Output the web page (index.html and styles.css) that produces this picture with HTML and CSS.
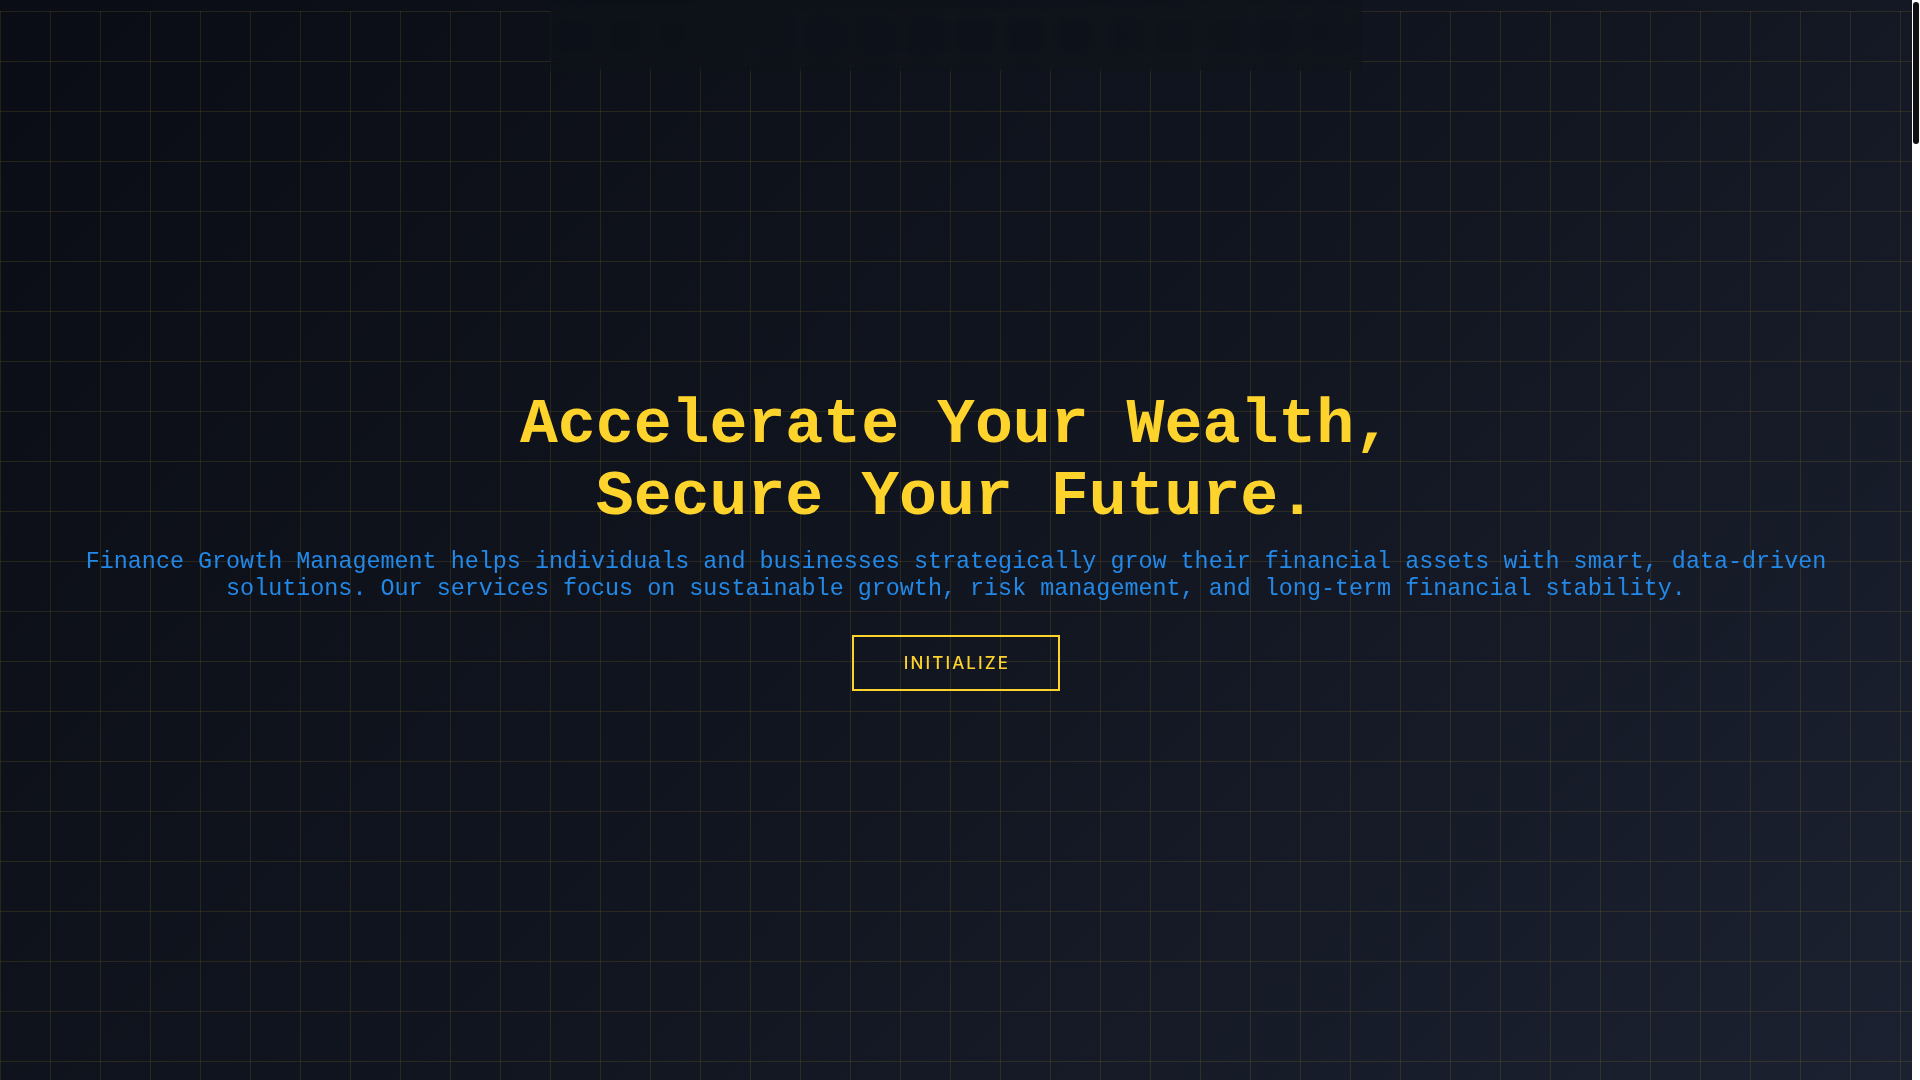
FILE: index.html
```html
<!DOCTYPE html>
<html lang="en">
<head>
<meta charset="utf-8">
<title>Finance Growth Management</title>
<link rel="stylesheet" href="styles.css">
</head>
<body>
  <div class="grid-bg" aria-hidden="true"></div>
  <header class="topnav"></header>
  <main>
    <section class="hero">
      <h1 class="hero-title">Accelerate Your Wealth,<br>Secure Your Future.</h1>
      <p class="hero-text">Finance Growth Management helps individuals and businesses strategically grow their financial assets with smart, data-driven solutions. Our services focus on sustainable growth, risk management, and long-term financial stability.</p>
      <a class="btn-init" href="#">INITIALIZE</a>
    </section>
  </main>
  <div class="scroll-rail" aria-hidden="true"><span class="scroll-thumb"></span></div>
</body>
</html>
```
FILE: styles.css
```css
* {
  box-sizing: border-box;
}

html {
  background: #ffffff;
}

body {
  margin: 0 8px 0 0;
  min-height: 100vh;
  background: linear-gradient(135deg, #0a0d15 0%, #11151f 50%, #1c2131 100%);
  background-attachment: fixed;
  color: #fdd32c;
  font-family: "Liberation Mono", "DejaVu Sans Mono", monospace;
}

/* faint yellow blueprint grid behind everything */
.grid-bg {
  position: fixed;
  top: 11px;
  left: 0;
  right: 8px;
  bottom: 0;
  z-index: 0;
  pointer-events: none;
  background-image:
    linear-gradient(to right, rgba(253, 211, 44, 0.11) 1px, transparent 1px),
    linear-gradient(to bottom, rgba(253, 211, 44, 0.11) 1px, transparent 1px);
  background-size: 50px 50px;
}

/* frosted top bar */
.topnav {
  position: fixed;
  top: 0;
  left: calc(50% - 4px);
  transform: translateX(-50%);
  width: 812px;
  height: 71px;
  z-index: 5;
  background: rgba(12, 16, 24, 0.35);
  backdrop-filter: blur(6px);
}

main {
  position: relative;
  z-index: 1;
}

.hero {
  min-height: 100vh;
  padding: 1px 32px 0;
  display: flex;
  flex-direction: column;
  align-items: center;
  justify-content: center;
  text-align: center;
}

.hero-title {
  margin: 0;
  font-family: "Liberation Mono", "DejaVu Sans Mono", monospace;
  font-weight: 700;
  font-size: 63.2px;
  line-height: 71.6px;
  color: #fdd32c;
}

.hero-text {
  margin: 16px 0 0;
  font-family: "Liberation Mono", "DejaVu Sans Mono", monospace;
  font-size: 23.4px;
  line-height: 27px;
  color: #2389e8;
}

.btn-init {
  margin-top: 32px;
  display: inline-block;
  padding: 16px 48px 16px 50px;
  border: 2px solid #fdd32c;
  color: #fdd32c;
  font-family: Inter, "Noto Sans", sans-serif;
  font-weight: 500;
  font-size: 17px;
  line-height: 20px;
  letter-spacing: 2.1px;
  text-decoration: none;
}

/* slim page scrollbar on the right edge */
.scroll-rail {
  position: fixed;
  top: 0;
  right: 0;
  width: 8px;
  height: 100vh;
  z-index: 10;
  background: #ffffff;
}

.scroll-thumb {
  position: absolute;
  top: 2px;
  left: 1px;
  width: 6px;
  height: 142px;
  border-radius: 3px;
  background: #111111;
}
```
